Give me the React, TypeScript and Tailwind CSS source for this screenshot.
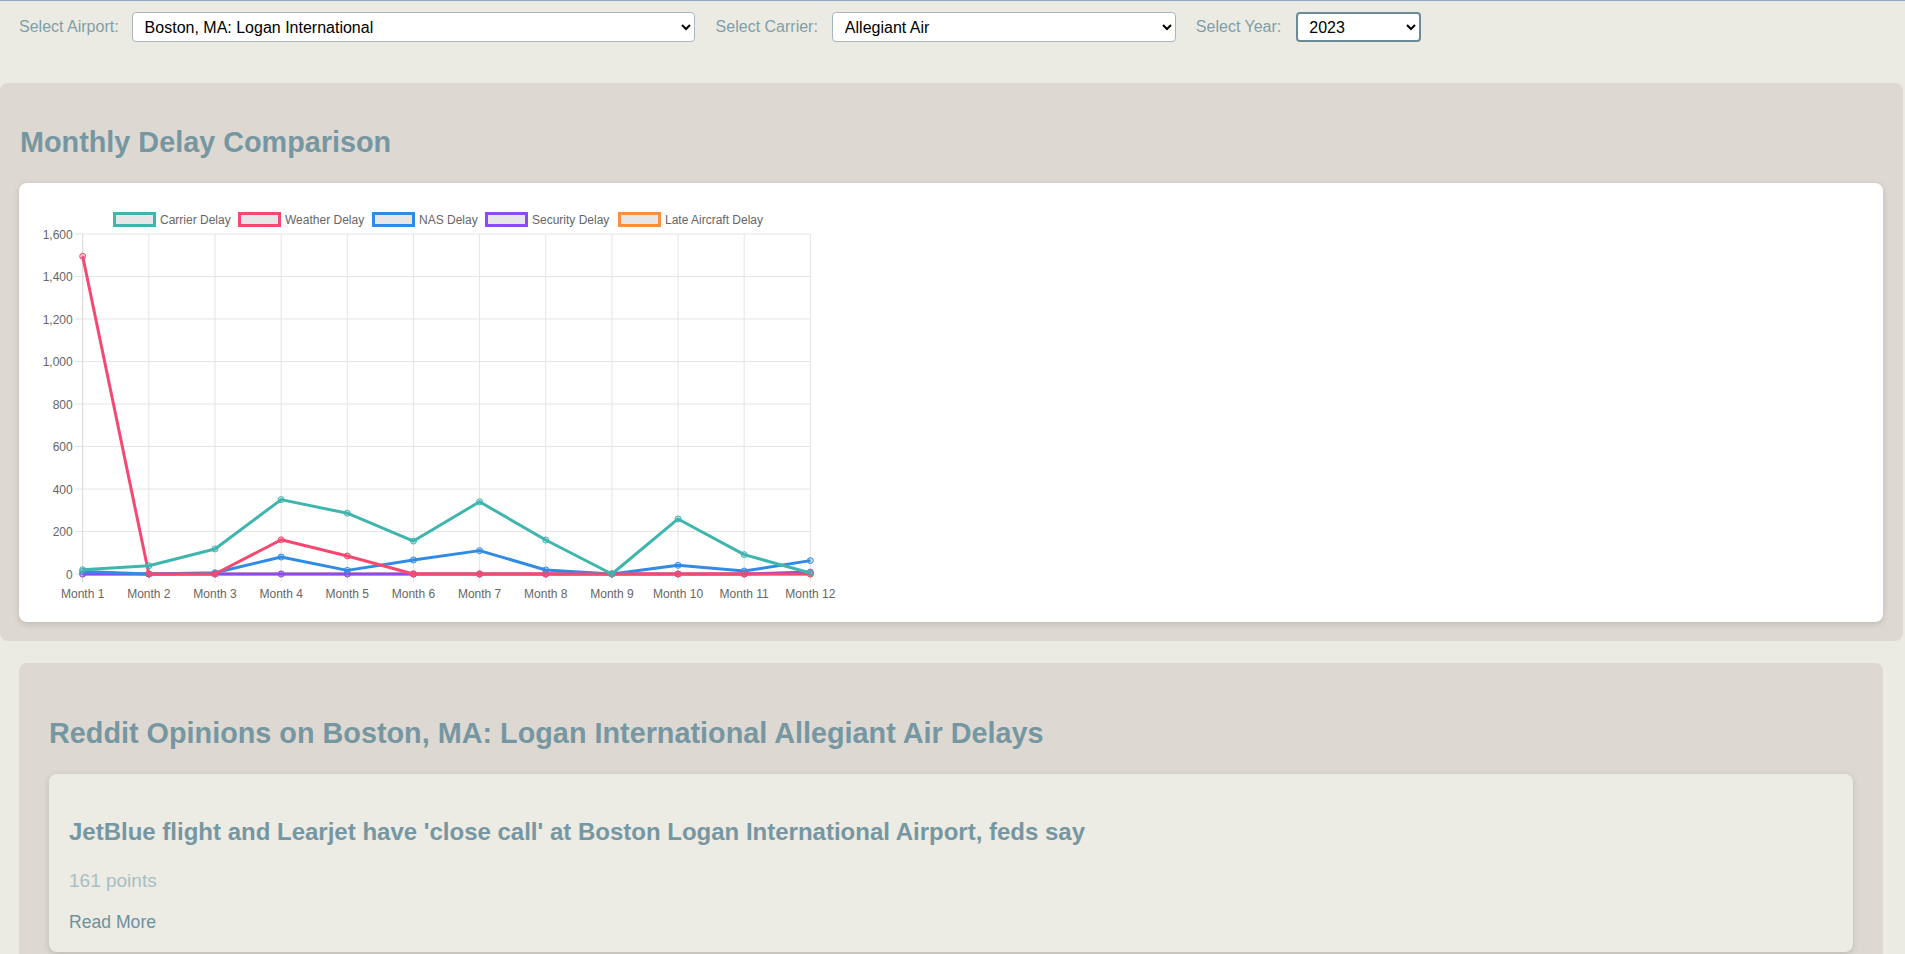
import React from "react";

const months = Array.from({ length: 12 }, (_, i) => `Month ${i + 1}`);

const series = [
  { label: "Carrier Delay", color: "#3fb5ae", data: [20, 39, 118, 350, 286, 155, 340, 160, 0, 259, 91, 5] },
  { label: "Weather Delay", color: "#f64870", data: [1495, 0, 0, 161, 85, 0, 0, 0, 0, 0, 0, 0] },
  { label: "NAS Delay", color: "#2f8be3", data: [12, 0, 6, 80, 17, 66, 110, 19, 0, 41, 14, 63] },
  { label: "Security Delay", color: "#8b4cf6", data: [0, 0, 0, 0, 0, 0, 0, 0, 0, 0, 0, 9] },
  { label: "Late Aircraft Delay", color: "#fb8f3a", data: [0, 0, 0, 0, 0, 0, 0, 0, 0, 0, 0, 0] },
];

const legendX = [94, 219, 353, 466, 599];

function DelayChart() {
  const X0 = 63.7;
  const DX = 66.15;
  const Y0 = 391;
  const K = 340 / 1600;
  const xs = (i: number) => X0 + i * DX;
  const ys = (v: number) => Y0 - v * K;
  const ticks = [0, 200, 400, 600, 800, 1000, 1200, 1400, 1600];

  return (
    <svg width="830" height="430" className="block" style={{ fontFamily: '"Liberation Sans", Arial, sans-serif' }}>
      {/* legend */}
      {series.map((s, i) => (
        <g key={s.label}>
          <rect x={legendX[i] + 1.5} y={30.5} width={40} height={12} fill="#e6e6e6" stroke={s.color} strokeWidth={3} />
          <text x={legendX[i] + 47} y={37} fontSize={12} fill="#666" dominantBaseline="central">
            {s.label}
          </text>
        </g>
      ))}

      {/* grid */}
      {ticks.map((t) => (
        <line key={t} x1={X0 - 8} x2={xs(11)} y1={ys(t)} y2={ys(t)} stroke="#e5e5e5" strokeWidth={1} />
      ))}
      {months.map((m, i) => (
        <line key={m} x1={xs(i)} x2={xs(i)} y1={ys(1600)} y2={Y0 + 8} stroke={i === 0 ? "#d6d6d6" : "#e5e5e5"} strokeWidth={1} />
      ))}

      {/* axis labels */}
      {ticks.map((t) => (
        <text key={t} x={X0 - 10} y={ys(t) + 0.5} fontSize={12} fill="#666" textAnchor="end" dominantBaseline="central">
          {t.toLocaleString("en-US")}
        </text>
      ))}
      {months.map((m, i) => (
        <text key={m} x={xs(i)} y={410.5} fontSize={12} fill="#666" textAnchor="middle" dominantBaseline="central">
          {m}
        </text>
      ))}

      {/* lines, first dataset on top */}
      {[...series].reverse().map((s) => (
        <g key={s.label}>
          <polyline
            points={s.data.map((v, i) => `${xs(i)},${ys(v)}`).join(" ")}
            fill="none"
            stroke={s.color}
            strokeWidth={3}
            strokeLinejoin="round"
          />
          {s.data.map((v, i) => (
            <circle key={i} cx={xs(i)} cy={ys(v)} r={3} fill={s.color} fillOpacity={0.25} stroke={s.color} strokeWidth={1} />
          ))}
        </g>
      ))}
    </svg>
  );
}

export default function App() {
  return (
    <div
      className="min-h-[954px] border-t border-[#93a6c2] bg-[#ecebe3] text-[16px]"
      style={{ fontFamily: '"Liberation Sans", Arial, sans-serif' }}
    >
      {/* filters */}
      <div className="flex h-[30px] items-center pl-[19px] mt-[11px] text-[#7f9ea8]">
        <label>Select Airport:</label>
        <select
          defaultValue="BOS"
          className="ml-[13px] h-[30px] w-[563px] rounded border border-[#a9b6bc] bg-white px-2 text-black"
        >
          <option value="ATL">Atlanta, GA: Hartsfield-Jackson Atlanta International</option>
          <option value="BOS">Boston, MA: Logan International</option>
          <option value="ORD">Chicago, IL: Chicago O'Hare International</option>
        </select>
        <label className="ml-[21px]">Select Carrier:</label>
        <select
          defaultValue="G4"
          className="ml-[14px] h-[30px] w-[344px] rounded border border-[#a9b6bc] bg-white px-2 text-black"
        >
          <option value="G4">Allegiant Air</option>
          <option value="AA">American Airlines</option>
          <option value="B6">JetBlue Airways</option>
        </select>
        <label className="ml-[20px]">Select Year:</label>
        <select
          defaultValue="2023"
          className="ml-[15px] h-[30px] w-[125px] rounded border-2 border-[#6b8b96] bg-white px-[7px] text-black"
        >
          <option value="2021">2021</option>
          <option value="2022">2022</option>
          <option value="2023">2023</option>
        </select>
      </div>

      {/* monthly chart */}
      <section className="mt-[41px] mr-[2px] rounded-lg bg-[#ddd9d2] pt-[42px] pb-[19px] pl-[19px] pr-[20px]">
        <h2 className="pl-px text-[28.8px] font-bold leading-[34px] text-[#7697a1]">Monthly Delay Comparison</h2>
        <div className="mt-[24px] h-[439px] rounded-lg bg-white shadow-[0_2px_6px_rgba(0,0,0,0.15)]">
          <DelayChart />
        </div>
      </section>

      {/* reddit */}
      <section className="mt-[22px] ml-[19px] mr-[22px] rounded-lg bg-[#ddd9d2] px-[30px] pt-[53px] pb-[20px]">
        <h2 className="text-[28.8px] font-bold leading-[34px] text-[#7697a1]">
          Reddit Opinions on Boston, MA: Logan International Allegiant Air Delays
        </h2>
        <div className="mt-[24px] rounded-lg bg-[#ecebe4] px-[20px] pt-[44px] pb-[20px] shadow-[0_2px_6px_rgba(0,0,0,0.15)]">
          <h3 className="text-[24px] font-bold leading-[28px] text-[#7697a1]">
            JetBlue flight and Learjet have 'close call' at Boston Logan International Airport, feds say
          </h3>
          <p className="mt-[24px] text-[19px] leading-[22px] text-[#a8bfc5]">161 points</p>
          <a href="#" className="mt-[20px] block text-[17.6px] leading-[20px] text-[#6f919c]">
            Read More
          </a>
        </div>
      </section>
    </div>
  );
}
